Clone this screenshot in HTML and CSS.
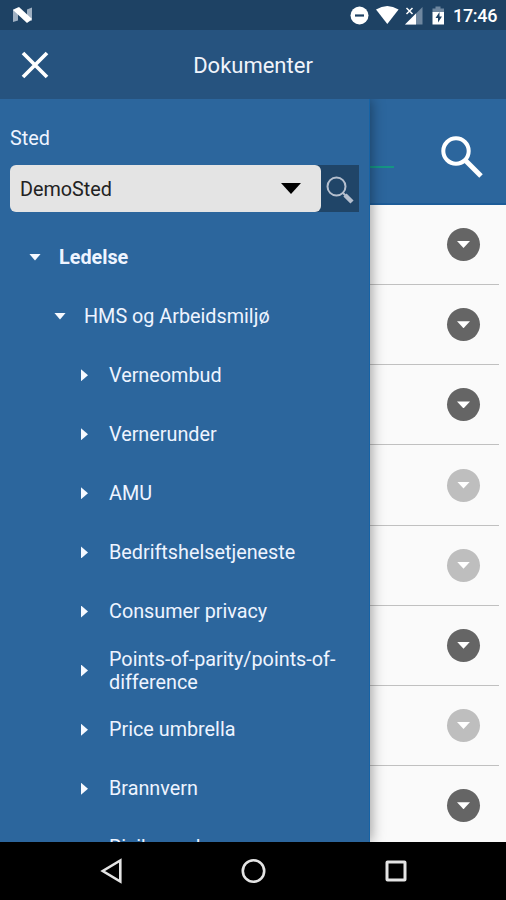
FILE: index.html
```html
<!DOCTYPE html>
<html lang="no">
<head>
<meta charset="utf-8">
<title>Dokumenter</title>
<link rel="stylesheet" href="styles.css">
</head>
<body>
<div class="phone">
  <div class="status">
    <svg class="logo" width="20" height="16" viewBox="0 0 20 16"><path d="M0 2.500l5-2v13l-5 1.500zM14 2.500l5-2v13l-5 1.500z" fill="#9fb0c2"/><path d="M0 3l6-3 13 12-5 4z" fill="#fff"/></svg>
    <svg width="104" height="30" viewBox="350 0 104 30" class="signals">
      <circle cx="359.500" cy="15.500" r="9" fill="#fff"/><path d="M355 15.500h9" stroke="#1e4264" stroke-width="2.200"/>
      <path d="M376 9.500q11.300-7 22.600 0l-11.300 14.500z" fill="#fff"/>
      <path d="M422.500 7v17.500h-17.500z" fill="#6f879f"/><path d="M416 13.500v11h-11z" fill="#fff"/><path d="M406.500 8l6 6m0-6l-6 6" stroke="#fff" stroke-width="1.500"/>
      <path d="M432.500 8.500h3v-2h5v2h3.500v4h-11.500z" fill="#6f879f"/><path d="M432.500 12h11.500v12.500h-11.500z" fill="#fff"/><path d="M439.500 12l-4 6h2.500v4.500l4-6h-2.500z" fill="#1e4264"/>
    </svg>
    <span class="time">17:46</span>
  </div>
  <header class="bar">
    <svg class="close" width="28" height="28" viewBox="0 0 28 28"><path d="M2 2l24 24M26 2L2 26" stroke="#fff" stroke-width="3.700"/></svg>
    <h1>Dokumenter</h1>
  </header>
  <main class="stage">
    <section class="drawer">
      <label>Sted</label>
      <div class="picker">
        <div class="select"><span>DemoSted</span><svg width="20" height="11" viewBox="0 0 20 11"><path d="M0 0h20l-10 11z"/></svg></div>
        <button class="find"><svg width="28" height="28" viewBox="0 0 28 28" fill="none" stroke="#b5bfce"><circle cx="10.500" cy="10.500" r="9" stroke-width="2"/><path d="M16.500 16.500l3 3" stroke-width="2"/><path d="M19 19l7 7" stroke-width="4.500"/></svg></button>
      </div>
      <ul class="tree">
        <li class="l1 open"><i></i><span>Ledelse</span></li>
        <li class="l2 open"><i></i><span>HMS og Arbeidsmiljø</span></li>
        <li><i></i><span>Verneombud</span></li>
        <li><i></i><span>Vernerunder</span></li>
        <li><i></i><span>AMU</span></li>
        <li><i></i><span>Bedriftshelsetjeneste</span></li>
        <li><i></i><span>Consumer privacy</span></li>
        <li><i></i><span>Points-of-parity/points-of-difference</span></li>
        <li><i></i><span>Price umbrella</span></li>
        <li><i></i><span>Brannvern</span></li>
        <li><i></i><span>Risikovurd</span></li>
      </ul>
    </section>
    <section class="content">
      <div class="search"><span class="underline"></span><svg width="42" height="42" viewBox="0 0 42 42" fill="none" stroke="#fff"><circle cx="15" cy="15" r="12.700" stroke-width="4"/><path d="M24 24l16 16" stroke-width="5"/></svg></div>
      <div class="rows">
        <div class="row"><b></b></div>
        <div class="row"><b></b></div>
        <div class="row"><b></b></div>
        <div class="row off"><b></b></div>
        <div class="row off"><b></b></div>
        <div class="row"><b></b></div>
        <div class="row off"><b></b></div>
        <div class="row"><b></b></div>
      </div>
    </section>
  </main>
  <nav class="nav">
    <svg width="506" height="58" viewBox="0 0 506 58" fill="none" stroke="#e4e4e4" stroke-width="2.600"><path d="M120.300 18.500v21l-17.500-10.500z"/><circle cx="253.500" cy="29" r="10.700"/><rect x="387" y="20" width="18" height="18" rx=".5" stroke-width="3"/></svg>
  </nav>
</div>
</body>
</html>
```
FILE: styles.css
```css
* { box-sizing: border-box; }
body { margin: 0; font-family: Roboto, "Liberation Sans", sans-serif; font-size: 19.800px; }
.phone { width: 506px; height: 900px; display: flex; flex-direction: column; overflow: hidden; background: #000; }
.status { height: 30px; flex: none; background: #1e4264; display: flex; align-items: center; padding: 0 9px 0 13px; color: #fff; }
.logo { margin-right: auto; }
.signals { flex: none; margin-right: -1px; }
.time { width: 44px; font-size: 18px; font-weight: 500; line-height: 30px; letter-spacing: -.3px; margin-top: 1px; white-space: nowrap; }
.bar { height: 69px; flex: none; background: #26537f; display: grid; grid-template-columns: 70px 1fr 70px; align-items: center; color: #f0f4fb; }
.close { margin-left: 21px; }
.bar h1 { margin: 2px 0 0; font-size: 22px; font-weight: 400; text-align: center; }
.stage { height: 743px; flex: none; display: flex; overflow: hidden; }
.drawer { width: 370px; flex: none; height: 743px; background: #2c669d; border-right: 1px solid #1663a6; padding: 25px 10px 0; color: #eef4ff; box-shadow: 1px 0 13px rgba(0, 0, 0, .4); z-index: 1; clip-path: inset(0 -20px 0 0); }
.drawer label { display: block; height: 30px; line-height: 30px; }
.picker { display: flex; height: 47px; margin-top: 11px; background: linear-gradient(90deg, transparent 300px, #204568 300px); }
.select { width: 311px; background: #e4e4e4; border-radius: 6px; display: flex; align-items: center; justify-content: space-between; padding: 0 20px 0 10px; color: #222; }
.select span { padding-top: 2px; }
.find { flex: 1; padding: 2px 0 0; border: 0; background: none; display: grid; place-items: center; }
.tree { list-style: none; margin: 15.500px 0 0; padding: 0; }
.tree li { height: 59.080px; display: flex; align-items: center; padding-left: 70px; line-height: 23px; }
.tree .l1 { padding-left: 19px; font-weight: 700; }
.tree .l2 { padding-left: 44px; }
.tree i { width: 7px; height: 12px; margin: 0 21px 0 1px; flex: none; background: #f6f9ff; clip-path: polygon(0 0, 100% 50%, 0 100%); }
.tree .open i { width: 12px; height: 7px; margin: 0 18px 0 0; clip-path: polygon(0 0, 100% 0, 50% 100%); }
.content { flex: 1; background: #fafafa; }
.search { height: 106px; background: #2c669d; border-bottom: 2px solid #1d5c98; display: flex; justify-content: space-between; padding: 37px 23px 0 0; }
.underline { width: 24px; height: 2px; background: #159583; margin-top: 30px; }
.row { height: 80.170px; margin-right: 7px; border-bottom: 1px solid #c0c0c0; display: flex; align-items: center; justify-content: flex-end; padding-right: 19px; }
.row b { width: 33px; height: 33px; border-radius: 50%; background: #656565; display: grid; place-items: center; }
.row b::after { content: ""; width: 13px; height: 7px; background: #fff; clip-path: polygon(0 0, 100% 0, 50% 100%); }
.row.off b { background: #bebebe; }
.nav { height: 58px; flex: none; background: #000; }
.nav svg { display: block; }
```
